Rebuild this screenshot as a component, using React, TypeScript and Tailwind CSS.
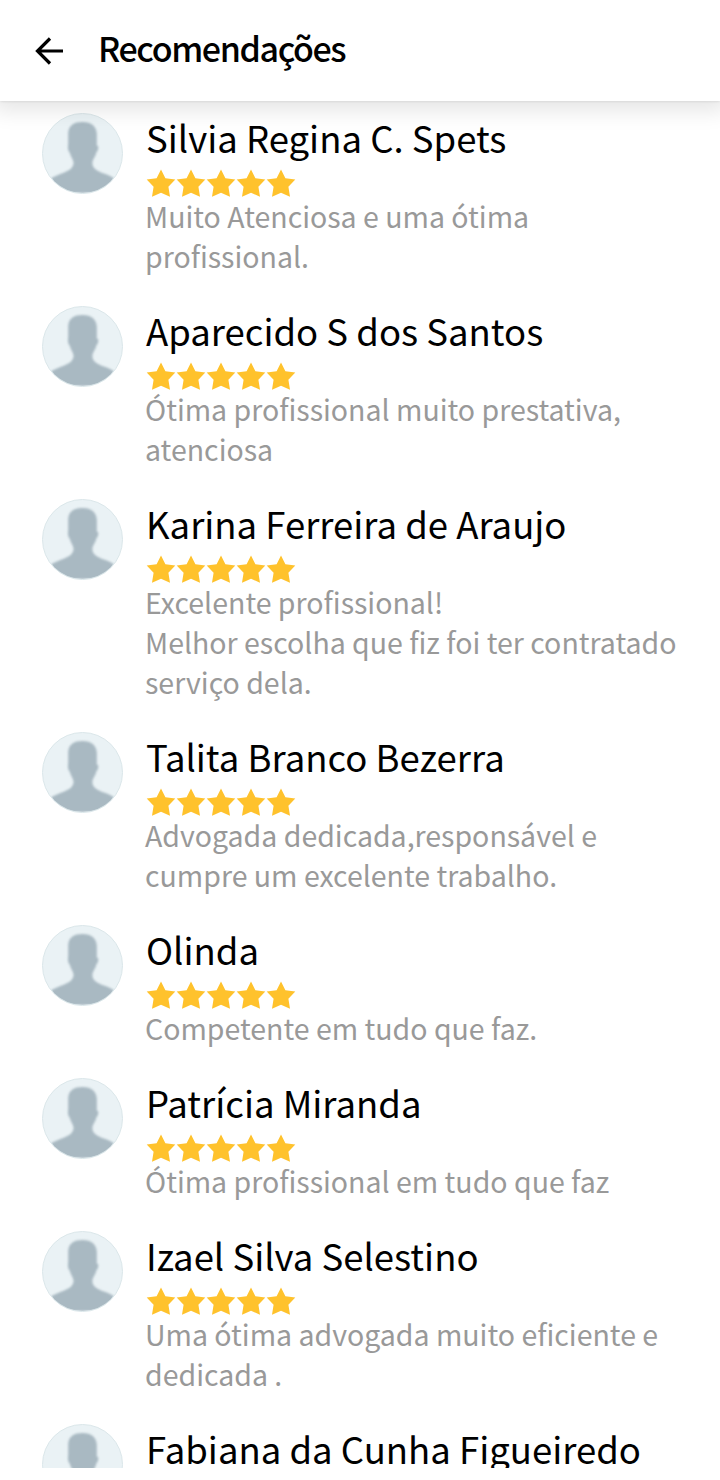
type Review = {
  name: string;
  lines: string[];
};

const reviews: Review[] = [
  { name: "Silvia Regina C. Spets", lines: ["Muito Atenciosa e uma ótima", "profissional."] },
  { name: "Aparecido S dos Santos", lines: ["Ótima profissional muito prestativa,", "atenciosa"] },
  {
    name: "Karina Ferreira de Araujo",
    lines: ["Excelente profissional!", "Melhor escolha que fiz foi ter contratado", "serviço dela."],
  },
  { name: "Talita Branco Bezerra", lines: ["Advogada dedicada,responsável e", "cumpre um excelente trabalho."] },
  { name: "Olinda", lines: ["Competente em tudo que faz."] },
  { name: "Patrícia Miranda", lines: ["Ótima profissional em tudo que faz"] },
  { name: "Izael Silva Selestino", lines: ["Uma ótima advogada muito eficiente e", "dedicada ."] },
  { name: "Fabiana da Cunha Figueiredo", lines: [] },
];

function BackArrow() {
  return (
    <svg width="28" height="28" viewBox="0 0 28 28" fill="none" stroke="#000" strokeWidth="3.2">
      <path d="M28 14H2.500M15 1.500L2.500 14L15 26.500" />
    </svg>
  );
}

function Avatar() {
  return (
    <div className="mt-px h-[81px] w-[81px] shrink-0 overflow-hidden rounded-full border border-[#dbe7ea] bg-[#eaf2f5]">
      <svg width="79" height="79" viewBox="0 0 80 80" className="blur-[0.8px]">
        <path
          d="M40 8C49 8 54 12 54.500 20V32C57 32 56 37 54 39C53 44 50 46 50 50C50 56 58 59 64 61C69 63 72 65 75 68V84H5V68C8 65 12 63 17 61C24 58 31 56 31 49C30 45 28 43 27 39C25 37 25 32 25.500 31V19C26 11 32 8 40 8Z"
          fill="#a9b9c2"
        />
      </svg>
    </div>
  );
}

function Stars() {
  return (
    <div className="flex h-7">
      {[0, 1, 2, 3, 4].map((i) => (
        <svg key={i} width="30" height="30" viewBox="0 0 30 30" fill="#ffc22c" className="shrink-0">
          <path d="M15 1.500L19.400 10.200L29.300 11.600L22.400 18.700L24 28.700L15 24.700L6 28.700L7.600 18.700L0.700 11.600L10.600 10.200Z" />
        </svg>
      ))}
    </div>
  );
}

function ReviewItem({ name, lines }: Review) {
  return (
    <li className="flex gap-[23px] pb-[29px]">
      <Avatar />
      <div className="-mt-px min-w-0 whitespace-nowrap">
        <h2 className="h-[57px] text-[36.5px] leading-[53px] text-black">{name}</h2>
        <Stars />
        <div className="-ml-px text-[28.5px] leading-10 text-[#999]">
          {lines.map((line) => (
            <p key={line}>{line}</p>
          ))}
        </div>
      </div>
    </li>
  );
}

export default function App() {
  return (
    <div className="h-[1480px] w-[720px] overflow-hidden bg-white font-['Noto_Sans_CJK_SC',sans-serif]">
      <div className="flex h-[1468px] flex-col overflow-hidden">
        <header className="relative z-10 flex h-[101px] shrink-0 items-center gap-[35px] bg-white pl-[35px] shadow-[0_0_3px_rgba(0,0,0,0.14),0_4px_20px_6px_rgba(0,0,0,0.1)]">
          <BackArrow />
          <h1 className="pb-[5px] text-[34px] leading-none font-medium tracking-[-1.4px] text-black">Recomendações</h1>
        </header>
        <ul className="pt-[11px] pl-[42px]">
          {reviews.map((review) => (
            <ReviewItem key={review.name} {...review} />
          ))}
        </ul>
      </div>
    </div>
  );
}
